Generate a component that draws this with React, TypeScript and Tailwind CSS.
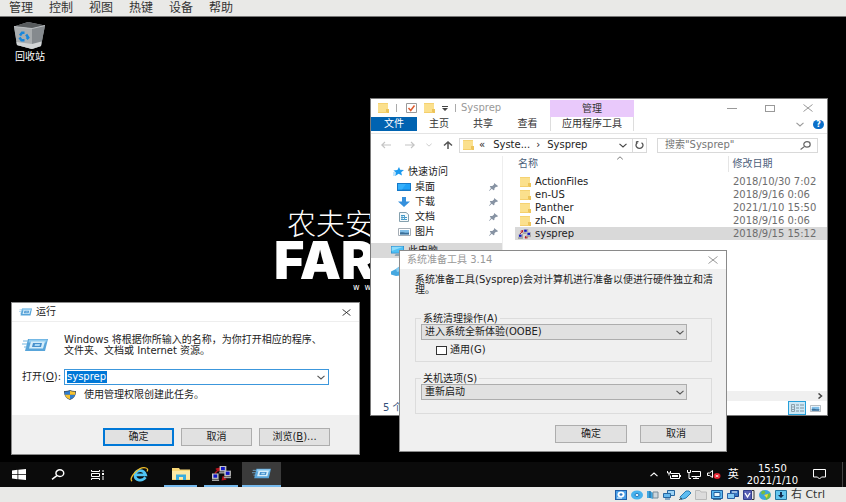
import React from "react";

type IconProps = { className?: string };

const Folder = ({ className = "h-[10px] w-[11px]" }: IconProps) => (
  <svg className={className} viewBox="0 0 11 10" preserveAspectRatio="none" aria-hidden="true">
    <rect width="10" height="10" fill="#fbe08d" />
    <path d="M0 0h10v1H0z" fill="#f5d272" />
    <path d="M8 6h3v4H8z" fill="#edc45a" />
    <path d="M0 9h9v1H0z" fill="#f5cf6c" />
  </svg>
);

const Chevron = ({ className = "h-[5px] w-[8px]", up = false }: IconProps & { up?: boolean }) => (
  <svg className={className} viewBox="0 0 8 5" fill="none" stroke="currentColor" strokeWidth="1.1" aria-hidden="true">
    <path d={up ? "M.5 4.2 4 1l3.5 3.2" : "M.5.8 4 4 7.5.8"} />
  </svg>
);

const Close = ({ className = "h-[8px] w-[10px]" }: IconProps) => (
  <svg className={className} viewBox="0 0 10 8" fill="none" stroke="currentColor" aria-hidden="true">
    <path d="M.5.5 9.500 7.500M9.500.5.5 7.500" />
  </svg>
);

const Arrow = ({ dir }: { dir: "left" | "right" | "up" }) => (
  <svg className="h-[8px] w-[10px]" viewBox="0 0 10 8" fill="none" stroke="currentColor" strokeWidth={dir === "up" ? 1.5 : 1.1} aria-hidden="true">
    {dir === "left" && <path d="M10 4H.8M4 1 .8 4 4 7" />}
    {dir === "right" && <path d="M0 4h9.200M6 1l3.200 3L6 7" />}
    {dir === "up" && <path d="M5 8V1M1 4.500 5 1l4 3.500" />}
  </svg>
);

const Pin = () => (
  <svg className="h-[8px] w-[9px]" viewBox="0 0 9 8" aria-hidden="true">
    <path d="M5 0 9 3 8 4 7 3.800 5.500 5.300 5.300 7 4.500 7.300 2.800 5.800.3 8 0 7.700 2 5 .8 3.800 1.300 3h2L5 1.500z" fill="#8793a3" />
  </svg>
);

const Search = ({ className = "h-[9px] w-[11px]" }: IconProps) => (
  <svg className={className} viewBox="0 0 11 9" fill="none" stroke="currentColor" strokeWidth="1.2" aria-hidden="true">
    <ellipse cx="7" cy="3.400" rx="3.200" ry="2.700" />
    <path d="M4.600 5.400.6 8.500" />
  </svg>
);

const RunIcon = ({ className = "h-[8px] w-[13px]" }: IconProps) => (
  <svg className={className} viewBox="0 0 26 14" preserveAspectRatio="none" aria-hidden="true">
    <path d="M6 1h20l-3 12H3z" fill="#58a5da" />
    <path d="M7 1.500h18l-1 3H6.500z" fill="#8fcbef" />
    <path d="M9 3.500h14l-2 7H7z" fill="#d5edfa" />
    <path d="M11 5h9l-1 4h-9z" fill="#4690cc" />
    <path d="M13 6h5l-.5 2h-5z" fill="#a8d8f5" />
    <path d="M1 3h5M0 6h5M2 9h3" stroke="#75b5df" />
  </svg>
);

const Computers = ({ className = "h-[11px] w-[13px]" }: IconProps) => (
  <svg className={className} viewBox="0 0 20 16" preserveAspectRatio="none" aria-hidden="true">
    <path d="M3 8 8 2.500M4 3.500l4-1-1 3M11 14l5-3M12 11l-1 3.500 4-.5" fill="none" stroke="#b3131c" strokeWidth="1.500" />
    {[[8, 0], [0, 8], [13, 5]].map(([x, y]) => (
      <g key={x} transform={`translate(${x} ${y})`}>
        <rect width="7" height="6" fill="#c9c9c9" />
        <path d="M7 0v6H0" fill="none" stroke="#5b5b5b" strokeWidth=".6" />
        <rect x="1.500" y="1" width="4" height="3.500" fill="#1015c4" />
        <path d="M-.5 6.500h8v1.500h-8z" fill="#a4a4a4" />
      </g>
    ))}
  </svg>
);

const Shield = () => (
  <svg className="h-[10px] w-[12px]" viewBox="0 0 12 10" aria-hidden="true">
    <path d="M6 0c2 1 4 1.200 6 1 .2 4.500-2 7.500-6 9C2 8.500-.2 5.500 0 1c2 .2 4 0 6-1z" fill="#40505f" />
    <path d="M6 .8v4H.9L.8 1.700C2.700 1.900 4.500 1.600 6 .8zM6 4.800h5c-.6 2-2.300 3.500-5 4.500z" fill="#2f7dd0" />
    <path d="M6 .8v4h5l.2-3.100C9.300 1.900 7.500 1.600 6 .8zM6 4.800H1c.6 2 2.300 3.500 5 4.500z" fill="#f7c331" />
  </svg>
);

const Monitor = () => (
  <svg className="h-[10px] w-[13px]" viewBox="0 0 13 10" aria-hidden="true">
    <path d="M0 0h13v7.500H0z" fill="#2f8fcc" />
    <path d="M.7.7h11.600v6H.7z" fill="#4fc0f5" />
    <path d="M.7.7h11.600L.7 5z" fill="#8fdcfb" />
    <path d="M5 7.500h3L9.500 10h-6z" fill="#8fa5b3" />
  </svg>
);

const Desktop = () => (
  <svg className="h-[8px] w-[14px]" viewBox="0 0 14 8" aria-hidden="true">
    <path d="M0 0h14v8H0z" fill="#1478c8" />
    <path d="M1 1h12v5.500H1z" fill="#1ea1f7" />
    <path d="M1 1h8L5 6.500H1z" fill="#35b0fb" />
  </svg>
);

const Download = () => (
  <svg className="h-[10px] w-[12px]" viewBox="0 0 12 10" aria-hidden="true">
    <path d="M4 0h4v4.500h4L6 10 0 4.500h4z" fill="#3590dc" />
  </svg>
);

const Doc = () => (
  <svg className="h-[10px] w-[10px]" viewBox="0 0 10 10" aria-hidden="true">
    <path d="M.5.5H7l2.500 2v7h-9z" fill="#f4fafc" stroke="#85a0ae" />
    <path d="M2 3.500h3M2 5.500h6M2 7.500h6" stroke="#4598c8" />
    <path d="M3 4v4M5.500 3v5" stroke="#54a4ce" />
  </svg>
);

const Picture = ({ className = "h-[8px] w-[13px]" }: IconProps) => (
  <svg className={className} viewBox="0 0 13 8" preserveAspectRatio="none" aria-hidden="true">
    <path d="M.5.500h12v7H.5z" fill="#fff" stroke="#a5adb5" />
    <path d="M2 2h9v4.500H2z" fill="#80bee8" />
    <path d="M2 4.500c3-1 5 1 9 0v2H2z" fill="#3b6f98" />
  </svg>
);

const Star = () => (
  <svg className="h-[9px] w-[11px]" viewBox="0 0 11 9" aria-hidden="true">
    <path d="M6 0 7.200 2.800 11 3 8.200 5.200 9 8.500 5.600 6.800 2.200 9 3 5.600.4 3.500 4.400 3z" fill="#1b9af0" />
    <path d="M0 6h3M0 8h2.500" stroke="#4fb3f3" strokeWidth=".7" />
  </svg>
);

const Cloud = () => (
  <svg className="h-[10px] w-[13px]" viewBox="0 0 13 10" aria-hidden="true">
    <path d="M0 5.500 5 3l4-3 4 1v8L5 10 0 8.500z" fill="#46a8e0" />
    <path d="m5 3 4-3 4 1v3L6 6z" fill="#86cdf2" />
  </svg>
);

const RecycleBin = () => (
  <svg className="h-[27px] w-[32px]" viewBox="0 0 32 27" aria-hidden="true">
    <path d="M0 4.500 14 0l17 3.500L27 24l-9 3L3 23z" fill="#9a9fa2" />
    <path d="M0 4.500 14 0l17 3.500-13 3z" fill="#575b5d" />
    <path d="M0 4.500 18 6.500 18 27 3 23z" fill="#a9adaf" />
    <path d="m18 6.500 13-3L27 24l-9 3z" fill="#858a8e" />
    <path d="m2.500 20 15.500 2 9.500-2.500L27 24l-9 3L3 23z" fill="#d2d5d6" />
    <path d="M0 4.500 18 6.500l13-3" fill="none" stroke="#c5c9cb" strokeWidth=".8" />
    <path d="M6 13.500 8 10.800h2.500M12.200 12.500l2 3-1.500 1.500M10.500 18.200H7.500L5.500 15.500" fill="none" stroke="#1787dd" strokeWidth="2.500" />
  </svg>
);

const menus = ["管理", "控制", "视图", "热键", "设备", "帮助"];

const places = [
  { name: "桌面", icon: <Desktop /> },
  { name: "下载", icon: <Download /> },
  { name: "文档", icon: <Doc /> },
  { name: "图片", icon: <Picture /> },
];

const files = [
  { name: "ActionFiles", date: "2018/10/30 7:02" },
  { name: "en-US", date: "2018/9/16 0:06" },
  { name: "Panther", date: "2021/1/10 15:50" },
  { name: "zh-CN", date: "2018/9/16 0:06" },
  { name: "sysprep", date: "2018/9/15 15:12", app: true },
];

function Explorer() {
  return (
    <section aria-label="Sysprep" className="absolute left-[370px] top-[81px] flex h-[318px] w-[458px] flex-col border border-[#7a7a7a] bg-white">
      <header className="flex h-[18px] shrink-0 items-center text-[#999]">
        <div className="flex w-[179px] items-center pl-[7px]">
          <Folder />
          <span className="ml-[7px] h-[8px] w-px bg-[#aaa]" />
          <svg className="ml-[9px] h-[10px] w-[11px]" viewBox="0 0 11 10" aria-hidden="true">
            <path d="M.5.5h10v9H.5z" fill="#fff" stroke="#9a9a9a" />
            <path d="m2.500 5 2.200 2.500L8.500 2.500" fill="none" stroke="#df5c2f" strokeWidth="1.500" />
          </svg>
          <Folder className="ml-[7px] h-[10px] w-[11px]" />
          <svg className="ml-[7px] h-[5px] w-[6px]" viewBox="0 0 6 5" aria-hidden="true">
            <path d="M0 0h6v1H0zM0 2h6L3 5z" fill="#444" />
          </svg>
          <span className="ml-[7px] h-[8px] w-px bg-[#aaa]" />
          <span className="ml-[5px]">Sysprep</span>
        </div>
        <div className="mt-px flex h-[17px] w-[84px] items-center justify-center bg-[#e9c9fb] text-[#333]">管理</div>
        <div className="ml-auto flex items-center gap-[28px] pr-[14px]">
          <button aria-label="最小化" className="h-px w-[10px] bg-[#999]" />
          <button aria-label="最大化" className="h-[7px] w-[10px] border border-[#999]" />
          <button aria-label="关闭"><Close /></button>
        </div>
      </header>
      <nav className="flex h-[17px] shrink-0 items-start border-b border-[#e4e4e4] text-[#333]">
        <button className="h-[14px] w-[46px] bg-[#0063b1] text-white">文件</button>
        <button className="h-[14px] w-[44px]">主页</button>
        <button className="h-[14px] w-[44px]">共享</button>
        <button className="h-[14px] w-[45px]">查看</button>
        <button className="h-[14px] w-[84px] border-x border-[#ddd]">应用程序工具</button>
        <div className="ml-auto flex h-[14px] items-center gap-[9px] pr-[3px] text-[#999]">
          <Chevron />
          <span className="flex h-[9px] w-[11px] items-center justify-center rounded-full bg-[#0a6fc9] text-[8px] font-bold leading-[9px] text-white">?</span>
        </div>
      </nav>
      <div className="flex h-[22px] shrink-0 items-center pl-[10px] pr-[9px] text-[#222]">
        <div className="flex w-[78px] items-center text-[#c4c4c4]">
          <Arrow dir="left" />
          <span className="ml-[14px] flex"><Arrow dir="right" /></span>
          <Chevron className="ml-[11px] h-[4px] w-[6px]" />
          <span className="ml-[11px] flex text-[#555]"><Arrow dir="up" /></span>
        </div>
        <div className="flex h-[15px] w-[188px] items-center border border-[#d9d9d9] pl-[3px]">
          <Folder />
          <span className="ml-[5px]">«</span>
          <span className="ml-[8px]">Syste...</span>
          <span className="ml-[6px]">›</span>
          <span className="ml-[7px]">Sysprep</span>
          <Chevron className="ml-auto mr-[5px] h-[5px] w-[8px] text-[#444]" />
          <span className="flex h-full w-[14px] items-center justify-center border-l border-[#d9d9d9]">
            <svg className="h-[8px] w-[9px]" viewBox="0 0 9 8" fill="none" stroke="#555" strokeWidth="1.300" aria-hidden="true">
              <path d="M2.500 1.800A3.500 3 0 1 0 6.500 1.800M3.500.5h-2M1.500.5v2.200" />
            </svg>
          </span>
        </div>
        <label className="ml-[10px] flex h-[15px] flex-1 items-center border border-[#d9d9d9] pl-[7px] pr-[6px] text-[#666]">
          <input aria-label="搜索" placeholder='搜索"Sysprep"' className="w-0 flex-1 outline-none placeholder:text-[#767676]" />
          <Search />
        </label>
      </div>
      <div className="flex min-h-0 flex-1">
        <aside className="w-[131px] shrink-0 pt-[8px] text-[#222]">
          <div className="flex h-[15px] items-center gap-[4px] pl-[22px]"><Star />快速访问</div>
          {places.map((p) => (
            <div key={p.name} className="flex h-[15px] items-center pl-[26px]">
              <span className="mr-[4px] flex w-[14px] justify-center">{p.icon}</span>
              {p.name}
              <span className="ml-auto mr-[4px]"><Pin /></span>
            </div>
          ))}
          <div className="mt-[4px] flex h-[15px] items-center gap-[4px] bg-[#d9d9d9] pl-[20px]"><Monitor />此电脑</div>
          <div className="mt-[5px] flex h-[15px] items-center pl-[20px]"><Cloud /></div>
        </aside>
        <div className="flex flex-1 flex-col border-l border-[#eee]">
          <div className="pl-[12px]">
            <table className="w-full table-fixed border-collapse text-left">
              <thead>
                <tr className="h-[16px] text-[#4c607a]">
                  <th className="w-[213px] p-0 font-normal">
                    <div className="flex h-[16px] items-start">
                      <span className="w-[101px] pl-[3px] pt-[2px]">名称</span>
                      <Chevron up className="h-[4px] w-[8px] text-[#666]" />
                    </div>
                  </th>
                  <th className="border-l border-[#e5e5e5] p-0 pl-[4px] font-normal">修改日期</th>
                </tr>
                <tr className="h-[3px]" />
              </thead>
              <tbody>
                {files.map((f) => (
                  <tr key={f.name} className="h-[13px] text-[#222] last:bg-[#d9d9d9]">
                    <td className="p-0">
                      <div className="flex h-[13px] items-center gap-[4px] pl-[3px]">
                        {f.app ? <Computers className="h-[10px] w-[13px]" /> : <Folder className="ml-[2px] h-[10px] w-[11px]" />}
                        {f.name}
                      </div>
                    </td>
                    <td className="whitespace-nowrap p-0 pl-[5px] text-[#6d6d6d]">{f.date}</td>
                  </tr>
                ))}
              </tbody>
            </table>
          </div>
          <div className="mt-auto flex h-[10px] items-center justify-end bg-[#f0f0f0] pr-[4px] text-[#444]">
            <svg className="h-[6px] w-[5px]" viewBox="0 0 5 6" fill="none" stroke="currentColor" strokeWidth="1.500" aria-hidden="true"><path d="m.5.5 3 2.500-3 2.500" /></svg>
          </div>
        </div>
      </div>
      <footer className="flex h-[14px] shrink-0 items-center pl-[12px] text-[#33507a]">
        5 个项目
        <span className="ml-auto flex h-[14px] w-[18px] items-center justify-center border border-[#26a0da] bg-[#cce8f6]">
          <svg className="h-[8px] w-[13px]" viewBox="0 0 13 8" fill="none" aria-hidden="true">
            <path d="M.5.500h3v7h-3zM.5 3h3M.5 5.500h3" stroke="#8da0ab" />
            <path d="M5 1h3M9 1h4M5 4h3M9 4h4M5 7h3M9 7h4" stroke="#7d929e" />
          </svg>
        </span>
        <span className="ml-[4px] mr-[6px]"><Picture className="h-[7px] w-[11px]" /></span>
      </footer>
    </section>
  );
}

const pushButton = "h-[18px] border border-[#adadad] bg-[#e1e1e1]";

function Choice({ id, value }: { id: string; value: string }) {
  return (
    <div className="relative w-[266px] text-[#222]">
      <select id={id} className="block h-[16px] w-full appearance-none border border-[#adadad] bg-[#e1e1e1] pl-[3px] leading-[14px]">
        <option>{value}</option>
      </select>
      <Chevron className="pointer-events-none absolute right-[3px] top-[6px] h-[5px] w-[8px] text-[#555]" />
    </div>
  );
}

function SysprepDialog() {
  return (
    <section role="dialog" aria-label="系统准备工具 3.14" className="absolute left-[399px] top-[233px] flex h-[202px] w-[328px] flex-col border border-[#8a8a8a] bg-[#f0f0f0] text-[#222]">
      <header className="flex h-[18px] shrink-0 items-center justify-between bg-white pl-[7px] pr-[8px] text-[#999]">
        系统准备工具 3.14
        <button aria-label="关闭"><Close /></button>
      </header>
      <div className="flex flex-col pl-[15px] pr-[14px]">
        <p className="mt-[6px] h-[38px] whitespace-nowrap leading-[10px]">系统准备工具(Sysprep)会对计算机进行准备以便进行硬件独立和清<br />理。</p>
        <fieldset className="h-[49px] border border-[#dcdcdc] pl-[5px]">
          <legend className="px-[2px] leading-[11px]"><label htmlFor="cleanup">系统清理操作(A)</label></legend>
          <Choice id="cleanup" value="进入系统全新体验(OOBE)" />
          <label className="ml-[15px] mt-[4px] flex h-[12px] items-center gap-[3px]">
            <input type="checkbox" className="h-[9px] w-[11px] appearance-none border border-[#333] bg-white" />
            通用(G)
          </label>
        </fieldset>
        <fieldset className="mt-[11px] h-[41px] border border-[#dcdcdc] pl-[5px]">
          <legend className="px-[2px] leading-[11px]"><label htmlFor="shutdown">关机选项(S)</label></legend>
          <Choice id="shutdown" value="重新启动" />
        </fieldset>
        <div className="mt-[11px] flex justify-end gap-[13px]">
          <button className={`w-[72px] ${pushButton}`}>确定</button>
          <button className={`w-[72px] ${pushButton}`}>取消</button>
        </div>
      </div>
    </section>
  );
}

function RunDialog() {
  return (
    <section role="dialog" aria-label="运行" className="absolute left-[11px] top-[285px] flex h-[153px] w-[349px] flex-col border border-[#8a8a8a] bg-white text-[#222]">
      <header className="flex h-[19px] shrink-0 items-center border-b border-[#eee] pl-[7px] pr-[8px]">
        <RunIcon />
        <span className="ml-[4px]">运行</span>
        <button aria-label="关闭" className="ml-auto"><Close className="h-[7px] w-[9px]" /></button>
      </header>
      <div className="flex flex-1 flex-col pl-[10px]">
        <div className="mt-[12px] flex items-center">
          <RunIcon className="h-[14px] w-[26px]" />
          <p className="ml-[16px] whitespace-nowrap leading-[11px]">Windows 将根据你所输入的名称，为你打开相应的程序、<br />文件夹、文档或 Internet 资源。</p>
        </div>
        <div className="mt-[13px] flex items-center">
          <label htmlFor="command" className="w-[42px]">打开(<u>O</u>):</label>
          <div className="flex h-[16px] w-[265px] items-center border border-[#3c97dc] pl-[2px] pr-[3px]">
            <input id="command" defaultValue="sysprep" className="h-[12px] w-[40px] bg-[#0078d7] text-white outline-none" />
            <Chevron className="ml-auto h-[5px] w-[8px] text-[#555]" />
          </div>
        </div>
        <div className="mt-[3px] flex h-[14px] items-center gap-[8px] pl-[42px]"><Shield />使用管理权限创建此任务。</div>
      </div>
      <footer className="flex h-[39px] shrink-0 items-center justify-end gap-[7px] bg-[#f0f0f0] pr-[29px] pt-[4px]">
        <button className="h-[18px] w-[71px] border-2 border-[#0078d7] bg-[#e1e1e1] leading-[14px]">确定</button>
        <button className={`w-[71px] ${pushButton}`}>取消</button>
        <button className={`w-[71px] ${pushButton}`}>浏览(<u>B</u>)...</button>
      </footer>
    </section>
  );
}

function Taskbar() {
  return (
    <footer className="flex h-[25px] shrink-0 items-stretch bg-[#0b0b0b] text-white">
      <button aria-label="开始" className="flex w-[38px] items-center justify-center">
        <svg className="h-[11px] w-[14px]" viewBox="0 0 14 11" fill="#fff" aria-hidden="true"><path d="M0 1.500 5.500.8v4.400H0zM6.300.7 14 0v5.200H6.300zM0 5.900h5.500v4.300L0 9.600zM6.300 5.900H14V11l-7.700-.8z" /></svg>
      </button>
      <button aria-label="搜索" className="flex w-[40px] items-center justify-center"><Search className="h-[11px] w-[14px]" /></button>
      <button aria-label="任务视图" className="flex w-[40px] items-center justify-center">
        <svg className="h-[10px] w-[14px]" viewBox="0 0 14 10" fill="none" stroke="#fff" aria-hidden="true"><path d="M.5 0v1.500h8V0M.5 3.500h8v3h-8zM.5 10V8.500h8V10M12 0v2M12 6v4" /><path d="M11 3h2v2h-2z" fill="#fff" stroke="none" /></svg>
      </button>
      <button aria-label="Internet Explorer" className="flex w-[43px] items-center justify-center">
        <svg className="h-[15px] w-[19px]" viewBox="0 0 19 15" fill="none" aria-hidden="true">
          <path d="M15.500 10.300C12.500 14.500 5 14 5 8.300S13.500 2 15.500 7.800H6" stroke="#50c5f4" strokeWidth="2.800" />
          <path d="M2 14.200C-2 11 9-1 16 1c1.800.5 2 2 1 3.500" stroke="#f2bf2b" strokeWidth="1.300" />
        </svg>
      </button>
      <button aria-label="文件资源管理器" className="ml-[3px] flex w-[33px] items-center justify-center border-b-2 border-[#76b9ed]">
        <svg className="h-[12px] w-[18px]" viewBox="0 0 18 12" aria-hidden="true"><path d="M0 0h7l1 1.500h10V12H0z" fill="#f9d877" /><path d="M0 3h18v8H0z" fill="#fde9a5" /><path d="M4 6.500h10V12h-3V9H7v3H4z" fill="#3badde" /></svg>
      </button>
      <button aria-label="sysprep" className="ml-[7px] flex w-[34px] items-center justify-center border-b-2 border-[#76b9ed]"><Computers className="h-[15px] w-[19px]" /></button>
      <button aria-label="运行" className="ml-[4px] flex w-[39px] items-center justify-center border-b-2 border-[#76b9ed] bg-[#3b3b3b]"><RunIcon className="h-[11px] w-[19px]" /></button>
      <div className="ml-auto flex items-center">
        <Chevron up className="h-[5px] w-[10px]" />
        <svg className="ml-[8px] h-[8px] w-[14px]" viewBox="0 0 14 8" fill="none" stroke="#fff" aria-hidden="true"><path d="M3.500 2.500h9v5h-9v-3M.5 0v2h3V0M2 2v2.500M13.500 4v2" /><path d="M5 4h6v2H5z" fill="#fff" stroke="none" /></svg>
        <svg className="ml-[6px] h-[9px] w-[14px]" viewBox="0 0 14 9" fill="none" stroke="#fff" aria-hidden="true"><path d="M5 1.500h8.500v5H4.500M9 6.500v2M6 8.500h6M.5 0v2.500h3V0M2 2.500v6h2" /></svg>
        <svg className="ml-[6px] h-[9px] w-[14px]" viewBox="0 0 14 9" aria-hidden="true"><path d="M.5 3h2l3-2.500v7L2.500 5.500h-2z" fill="none" stroke="#fff" /><ellipse cx="10" cy="6" rx="3.500" ry="3" fill="#e11d2a" /><path d="m8.500 5 3 2m0-2-3 2" stroke="#fff" strokeWidth=".8" /></svg>
        <span className="ml-[7px] text-[11px]">英</span>
        <time className="ml-[8px] text-center leading-[12px]">15:50<br />2021/1/10</time>
        <svg className="ml-[15px] h-[11px] w-[13px]" viewBox="0 0 13 11" fill="none" stroke="#fff" aria-hidden="true"><path d="M.5.5h12v7.500h-4L6.500 10 4.500 8h-4z" /></svg>
        <span className="ml-[16px] mr-[3px] h-[25px] w-px bg-[#444]" />
      </div>
    </footer>
  );
}

const deviceIcons = [
  <><rect x=".5" y=".5" width="11" height="9" fill="#4aa0e8" stroke="#1f5ea8" /><ellipse cx="6" cy="4.500" rx="3.500" ry="3" fill="#fff" /><ellipse cx="6" cy="4.500" rx="1.500" ry="1.200" fill="#2f79c4" /><path d="M2 8h5" stroke="#fff" /></>,
  <><ellipse cx="6" cy="5" rx="6" ry="4.500" fill="#46b2ee" /><ellipse cx="6" cy="5" rx="2" ry="1.500" fill="#fff" stroke="#1b75bb" /></>,
  <><path d="M0 1h3l3 2v6L3 8H0z" fill="#43a7e0" /><path d="M6 2h5v6H6z" fill="#cbd6dd" stroke="#788b97" /><path d="M3 1v7" stroke="#1c6799" /></>,
  <><path d="M4.500.5h7v5h-7z" fill="#9ed3f5" stroke="#2767a0" /><path d="M.5 3.500h7v4h-7z" fill="#68b8ed" stroke="#2767a0" /><path d="M2 9h5" stroke="#2767a0" /></>,
  <><path d="m1 7 6-6h3l2 2-5 5-5 1.500z" fill="#5dbcf1" stroke="#277cb3" /><path d="m0 10 3-2" stroke="#444" /></>,
  <path d="M.5 2V.5H5L6 2h5.500v7.500H.5z" fill="#dcdcdc" stroke="#bababa" />,
  <><path d="M.5.5h11v8H.5z" fill="#5cb9f1" stroke="#215f9c" /><path d="M3 2.500h6v4H3z" fill="#e8f8ff" stroke="#215f9c" /><path d="M2 9.500h8" stroke="#4b7396" /></>,
  <><path d="M3.500.5h8v6h-8z" fill="#3776c4" stroke="#173f88" /><path d="M.5 3.500h7v5h-7z" fill="#85caf4" stroke="#2d62a5" /><path d="M5 2h5" stroke="#fff" /></>,
  <><path d="M.5.5h8v9h-8z" fill="#575eb3" stroke="#333f8c" /><path d="m2 3 2.500 4L7 3" fill="none" stroke="#fff" strokeWidth="1.400" /><path d="M9 .500h2v9H9" fill="none" stroke="#333" /></>,
  <><ellipse cx="6" cy="5" rx="6" ry="5" fill="#3fa5dd" /><path d="M3 1c4-1 4 2 2 3S1 4 3 1zM6 5l5-2c1 3 0 5-4 7z" fill="#72bf3f" /><path d="m5 5 4-1-1 4z" fill="#f1da42" /></>,
  <><path d="M.5.500h11v9H.5z" fill="#63c5ef" stroke="#24729e" /><path d="M5 2h2v3h2L6 8 3 5h2z" fill="#102c51" /></>,
];

export default function App() {
  return (
    <div className="flex h-screen flex-col overflow-hidden bg-black font-['DejaVu_Sans','Noto_Sans_CJK_SC',sans-serif] text-[10px] leading-[12px]">
      <nav className="flex h-[17px] shrink-0 items-center gap-[16px] border-b border-[#777] bg-[#e9e9e7] pl-[9px] text-[12px] text-[#333]">
        {menus.map((m) => (
          <button key={m}>{m}</button>
        ))}
      </nav>
      <main className="relative min-h-0 flex-1 overflow-hidden bg-black">
        <div className="flex w-[60px] flex-col items-center gap-[2px] pt-[5px] text-white">
          <RecycleBin />
          <span>回收站</span>
        </div>
        <div className="absolute left-[287px] top-[193px] whitespace-nowrap text-[29px] font-light leading-[30px] text-white">农夫安</div>
        <div className="absolute left-[274px] top-[223px] font-[Inter,sans-serif] text-[52px] font-black leading-[42px] text-white">FAR</div>
        <div className="absolute left-[353px] top-[265px] flex gap-[5px] text-[8px] text-white"><span>w</span><span>w</span></div>
        <Explorer />
        <SysprepDialog />
        <RunDialog />
      </main>
      <Taskbar />
      <div className="flex h-[15px] shrink-0 items-center justify-end gap-[4px] bg-[#e9e9e7] pr-[21px] text-[#333]">
        {deviceIcons.map((d, i) => (
          <svg key={i} className="h-[10px] w-[12px]" viewBox="0 0 12 10" fill="none" aria-hidden="true">{d}</svg>
        ))}
        <span className="text-[11px]">右 Ctrl</span>
      </div>
    </div>
  );
}
